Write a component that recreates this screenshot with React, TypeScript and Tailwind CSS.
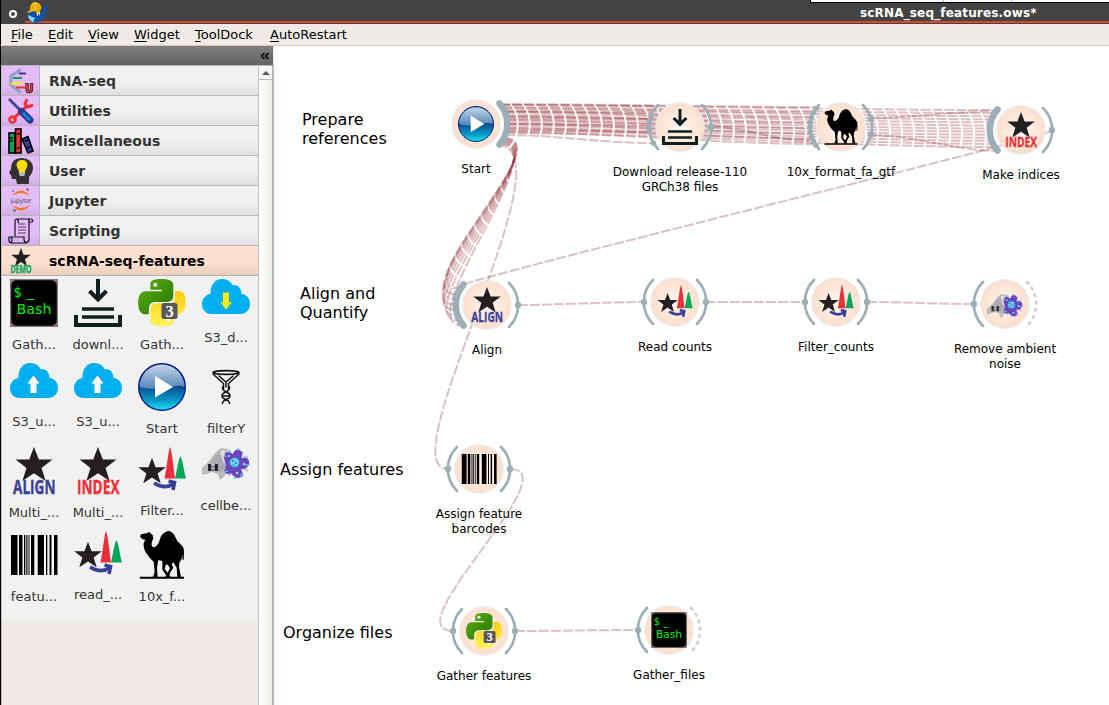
import React from "react";

const STAR = "0,-10 2.6,-3.1 10,-3.1 4.1,1.4 6.3,8.6 0,4.3 -6.3,8.6 -4.1,1.4 -10,-3.1 -2.6,-3.1";

type IconProps = { className?: string };

function Svg({ box = "0 0 48 48", className = "size-12", children }: { box?: string; className?: string; children: React.ReactNode }) {
  return (
    <svg viewBox={box} className={`block shrink-0 overflow-visible ${className}`}>
      {children}
    </svg>
  );
}

function BashIcon({ className }: IconProps) {
  return (
    <Svg className={className}>
      <rect width="48" height="48" fill="#86767a" />
      <rect x="1.5" y="1.5" width="45" height="45" rx="5" fill="#000" stroke="#222" />
      <g fill="#00f000" fontFamily="DejaVu Sans, sans-serif" fontSize="13.5">
        <text x="3.5" y="17.5">$</text>
        <text x="17" y="17.5">_</text>
        <text x="6.5" y="35" textLength="35" lengthAdjust="spacingAndGlyphs">Bash</text>
      </g>
    </Svg>
  );
}

function DownloadIcon({ className }: IconProps) {
  return (
    <Svg className={className}>
      <g fill="none" stroke="#111f1f" strokeWidth="4">
        <path d="M24 0V20M15.5 12L24 20.5L32.5 12" />
        <path d="M8 30H40M8 38H40" strokeWidth="3.4" />
        <path d="M2 36V46H46V36" />
      </g>
    </Svg>
  );
}

function PythonIcon({ className }: IconProps) {
  return (
    <Svg className={className}>
      <defs>
        <linearGradient id="pyGreen" x1="0" y1="0" x2="1" y2="1">
          <stop offset="0" stopColor="#5db512" />
          <stop offset="1" stopColor="#237000" />
        </linearGradient>
        <linearGradient id="pyGold" x1="0" y1="0" x2="0" y2="1">
          <stop offset="0" stopColor="#ffcb10" />
          <stop offset="1" stopColor="#fff35a" />
        </linearGradient>
      </defs>
      <g transform="translate(0.2 0) scale(1.97)">
        <path fill="url(#pyGreen)" d="M14.25.18l.9.2.73.26.59.3.45.32.34.34.25.34.16.33.1.3.04.26.02.2-.01.13V8.5l-.05.63-.13.55-.21.46-.26.38-.3.31-.33.25-.35.19-.35.14-.33.1-.3.07-.26.04-.21.02H8.77l-.69.05-.59.14-.5.22-.41.27-.33.32-.27.35-.2.36-.15.37-.1.35-.07.32-.04.27-.02.21v3.06H3.17l-.21-.03-.28-.07-.32-.12-.35-.18-.36-.26-.36-.36-.35-.46-.32-.59-.28-.73-.21-.88-.14-1.05-.05-1.23.06-1.22.16-1.04.24-.87.32-.71.36-.57.4-.44.42-.33.42-.24.4-.16.36-.1.32-.05.24-.01h.16l.06.01h8.16v-.83H6.18l-.01-2.75-.02-.37.05-.34.11-.31.17-.28.25-.26.31-.23.38-.2.44-.18.51-.15.58-.12.64-.1.71-.06.77-.04.84-.02 1.27.05z" />
        <circle cx="8.7" cy="2.9" r="1" fill="#fff" />
        <path fill="url(#pyGold)" d="M21.1 6.11l.28.06.32.12.35.18.36.27.36.35.35.47.32.59.28.73.21.88.14 1.04.05 1.23-.06 1.23-.16 1.04-.24.86-.32.71-.36.57-.4.45-.42.33-.42.24-.4.16-.36.09-.32.05-.24.02-.16-.01h-8.22v.82h5.84l.01 2.76.02.36-.05.34-.11.31-.17.29-.25.25-.31.24-.38.2-.44.17-.51.15-.58.13-.64.09-.71.07-.77.04-.84.01-1.27-.04-1.07-.14-.9-.2-.73-.25-.59-.3-.45-.33-.34-.34-.25-.34-.16-.33-.1-.3-.04-.25-.02-.2.01-.13v-5.34l.05-.64.13-.54.21-.46.26-.38.3-.32.33-.24.35-.2.35-.14.33-.1.3-.06.26-.04.21-.02.13-.01h5.84l.69-.05.59-.14.5-.21.41-.28.33-.32.27-.35.2-.36.15-.36.1-.35.07-.32.04-.28.02-.21V6.07h2.09l.14.01z" />
        <circle cx="15.2" cy="20.8" r="1" fill="#fffbe0" />
      </g>
      <rect x="23.5" y="24" width="16" height="16" rx="2.5" fill="#585858" />
      <text x="31.5" y="37.600" textAnchor="middle" fill="#fff" fontSize="16.5" fontWeight="700" fontFamily="Liberation Serif, serif">3</text>
    </Svg>
  );
}

function CloudIcon({ up }: { up?: boolean }) {
  return (
    <Svg box="0 0 48 35" className="h-[35px] w-12">
      <path fill="#00aff0" d="M9.500 35C3.500 35 0 30.500 0 25C0 19.500 4 15.500 8.500 15C8 6 13 0 20 0C26 0 29 3 31 6.500C36 5 39.500 10 39.500 15C45 15.500 48 20 48 25C48 30.500 44 35 38.500 35Z" />
      {up ? (
        <path fill="#fff" d="M23.500 12.500L29.500 20.500H26.500V30H20.500V20.500H17.500Z" />
      ) : (
        <path fill="#ffee10" d="M21 13.500H27V23H30L24 30.500L18.500 23H21Z" />
      )}
    </Svg>
  );
}

function StartIcon({ className }: IconProps) {
  return (
    <Svg className={className}>
      <defs>
        <linearGradient id="playBase" x1="0" y1="0" x2="0" y2="1">
          <stop offset="0" stopColor="#08407c" />
          <stop offset=".5" stopColor="#084d90" />
          <stop offset=".8" stopColor="#099cca" />
          <stop offset="1" stopColor="#25e1ee" />
        </linearGradient>
        <linearGradient id="playGloss" x1="0" y1="0" x2="0" y2="1">
          <stop offset="0" stopColor="#c3d8e9" />
          <stop offset="1" stopColor="#5484b6" />
        </linearGradient>
      </defs>
      <circle cx="24" cy="24" r="23.300" fill="url(#playBase)" stroke="#00118c" strokeWidth="1.300" />
      <path d="M1.500 24A22.500 22.500 0 0 1 46.500 24C35 19 28 30 1.500 24Z" fill="url(#playGloss)" />
      <path d="M17 13V34.500L35 24Z" fill="#fff" />
    </Svg>
  );
}

function FunnelIcon() {
  return (
    <Svg box="0 0 48 46" className="h-[46px] w-12">
      <g fill="none" stroke="#111" strokeWidth="1.700" strokeLinecap="round">
        <ellipse cx="24" cy="9.500" rx="13" ry="1.800" />
        <path d="M11 11L21.500 20.500V26M37 11L26.500 20.500V26M17 13L24 19L31 13M24 19V24" strokeWidth="1.500" />
        <path d="M20.500 24C20 30 28 28 28 33C28 37 20 36 20.500 40.500M27.500 24C28 30 20 28 20 33C20 37 28 36 27.500 40.500M21 33H27" strokeWidth="1.500" />
      </g>
    </Svg>
  );
}

function StarWord({ word, color, className }: { word: string; color: string; className?: string }) {
  return (
    <Svg className={className}>
      <polygon points={STAR} fill="#231f20" transform="translate(24 18.300) scale(1.840)" />
      <text
        x="3"
        y="47.200"
        fill={color}
        stroke={color}
        strokeWidth=".4"
        fontFamily="Open Sans, sans-serif"
        fontWeight="700"
        fontSize="19"
        textLength="42.500"
        lengthAdjust="spacingAndGlyphs"
      >
        {word}
      </text>
    </Svg>
  );
}

function AlignIcon({ className }: IconProps) {
  return <StarWord word="ALIGN" color="#3b3f98" className={className} />;
}

function IndexIcon({ className }: IconProps) {
  return <StarWord word="INDEX" color="#ef2f37" className={className} />;
}

function CountsIcon({ className = "h-[46px] w-12" }: IconProps) {
  return (
    <Svg box="0 0 48 46" className={className}>
      <polygon points={STAR} fill="#231f20" transform="translate(14 24.500) scale(1.380)" />
      <path d="M32 0C34 4 35.500 21 37 31.500H26.500C29 20 30 5 32 0Z" fill="#ef2f37" />
      <path d="M42.500 9C45 14 46 25 48 31.500H37C39 24 40 13 42.500 9Z" fill="#00a65a" />
      <path d="M16 36Q27 43 36 36.500M30.500 34L36.500 35.500L35 43" fill="none" stroke="#3b3f98" strokeWidth="3.600" />
    </Svg>
  );
}

const SPIKES = [0, 30, 60, 90, 120, 150, 180, 210, 240, 270, 300, 330];

function CellIcon({ className = "h-[41px] w-12" }: IconProps) {
  return (
    <Svg box="0 0 48 41" className={className}>
      <path d="M0 28L0 21L7 14L14 5L19 1L26 2L29 12L30 23L25 26L21 31L18 33L16 27L10 25L5 27Z" fill="#bdbdc0" />
      <path d="M9 14L18 4L20 14L24 20L19 26L8 22Z" fill="#acacb0" />
      <path d="M18 4L22 3L25 12L22 17Z" fill="#dedee0" />
      <path d="M6 17H9V24H6ZM13 17H16V24H13Z" fill="#29292d" />
      <path d="M9 18H13V24H9Z" fill="#77777b" />
      <path d="M9.500 18H12.500M9.500 21H12.500" stroke="#eee" />
      <g transform="translate(34 17)" stroke="#a39fe2" strokeWidth="1.400">
        {SPIKES.map((a) => (
          <path key={a} d="M10 0H14" transform={`rotate(${a})`} />
        ))}
      </g>
      <path d="M23 6Q27 4 31 7Q33 1 38 3Q42 6 39 11Q48 10 47 16Q46 23 39 22Q43 29 37 31Q32 31 29 26Q24 29 22 24Q24 21 24 17Q21 12 23 6Z" fill="#6945bd" />
      <g stroke="#65b7ea" strokeWidth="1.400">
        <path d="M27 3L29 6M36 1V4M44 9L41 11M47 18H43M41 30L38 27M33 32V29M22 25L26 24M22 8L25 10" />
      </g>
      <circle cx="32.500" cy="15.500" r="4.800" fill="#72d4ef" stroke="#2493c9" />
      <path d="M30 14H32M33 16H35M31 18H32" stroke="#206fbd" strokeWidth="1.500" />
      <circle cx="27" cy="9" r="1" fill="#a9e3ee" />
      <circle cx="42" cy="17" r="1.200" fill="#a9e3ee" />
      <circle cx="35" cy="26" r="1.200" fill="#a9e3ee" />
    </Svg>
  );
}

const BARS = [
  [1, 6.5], [9, 3.5], [14, 1.3], [16.3, 1.2], [18.5, 1], [21, 3.3], [27.7, 6.3], [36, 1.3], [39.5, 2], [44, 3.5],
];

function BarcodeIcon({ className }: IconProps) {
  return (
    <Svg className={className}>
      <rect x="1" y="4" width="47" height="40" fill="#fff" opacity=".5" />
      {BARS.map(([x, w]) => (
        <rect key={x} x={x} y="4" width={w} height="40" fill="#000" />
      ))}
    </Svg>
  );
}

function CamelIcon({ className }: IconProps) {
  return (
    <Svg box="0 0 144 144" className={className}>
      <path
        d="M6 17L9 10L18 8L28 6L34 2L37 7L44 12L46 22L42 32Q38 44 46 49Q55 48 62 36L68 18Q74 5 90 0Q102 0 110 14L118 30L130 42Q139 50 138 66L137 88L133 84L134 68L130 86L124 95L123 108L129 138H118L116 110L106 94L101 100L106 110L98 122L92 138H82L96 112L90 102L84 100L80 114L92 130L98 138H88L73 116V90L61 87L57 110L59 138H45L50 124L47 92L36 82L22 62Q14 44 18 34L22 26L14 25Z"
        fill="#000"
      />
      <path d="M6 140H138" stroke="#000" strokeWidth="6" />
    </Svg>
  );
}

function RnaIcon() {
  return (
    <Svg box="0 0 26 26" className="size-[26px]">
      <path d="M13 1.500L3 8V17L13 25" fill="none" stroke="#8fa2c8" strokeWidth="3.200" />
      <path d="M11 5.500H18" stroke="#3a389c" strokeWidth="2" />
      <path d="M5 10H14" stroke="#169a68" strokeWidth="2" />
      <path d="M3 15.500H14" stroke="#ffef00" strokeWidth="2" />
      <path d="M8 19.500H17" stroke="#e63238" strokeWidth="2" />
      <path d="M19 15V21Q19 23.500 21.300 23.500T23.500 21V15" fill="none" stroke="#4b2430" strokeWidth="3.400" />
      <path d="M19 16V21Q19 23.500 21.300 23.500T23.500 21V16" fill="none" stroke="#e04040" strokeWidth="1.500" />
    </Svg>
  );
}

function ToolsIcon() {
  return (
    <Svg box="0 0 26 26" className="size-[26px]">
      <path d="M5 21L20 7" stroke="#ef2f37" strokeWidth="3" />
      <circle cx="4.500" cy="21.500" r="3" fill="none" stroke="#ef2f37" strokeWidth="2.600" />
      <path d="M19 1L17 6L20 9L25 7" fill="none" stroke="#ef2f37" strokeWidth="3" />
      <path d="M1 1L12 12" stroke="#3b3f98" strokeWidth="2.600" />
      <path d="M13.500 13.500L22 22" stroke="#303894" strokeWidth="7" strokeLinecap="round" />
      <path d="M15 15L22 22" stroke="#0a8fd4" strokeWidth="2.500" />
    </Svg>
  );
}

function BooksIcon() {
  return (
    <Svg box="0 0 26 26" className="size-[26px]">
      <g stroke="#000" strokeWidth="1.600">
        <rect x="1" y="5" width="6" height="20" fill="#00a65a" />
        <rect x="7.500" y="1" width="5.500" height="24" fill="#ef2f37" />
        <path d="M14 11L20 8.500L25 23L20 25Z" fill="#3b3f98" />
      </g>
      <path d="M2 10H5M2 13H5M9 6H12M9 20H12M17 13L20 12M19 20L22 19" stroke="#000" strokeWidth="1.500" />
    </Svg>
  );
}

function UserIcon() {
  return (
    <Svg box="0 0 26 26" className="size-[26px]">
      <path d="M9 26L8 21H4L3 17L1 15L3 11Q3 0 14 0Q25 1 25 10Q25 15 21 19V26Z" fill="#333132" />
      <path d="M8.500 7Q9 2 14 2T19.500 7Q19 10 17 13V16H11V13Q9 10 8.500 7Z" fill="#ffdd05" />
      <path d="M11.500 14H16.500V18H11.500Z" fill="#aebdc2" />
    </Svg>
  );
}

function JupyterIcon() {
  return (
    <Svg box="0 0 26 26" className="size-[26px]">
      <path d="M4 8Q13-3 22 8Q13 2 4 8ZM4 17Q13 28 22 17Q13 23 4 17Z" fill="#f37726" />
      <text x="2.500" y="14.500" fontSize="6.500" textLength="21" fill="#4e4e4e" fontFamily="DejaVu Sans, sans-serif">jupyter</text>
      <g fill="#808285">
        <circle cx="5" cy="3" r="1" />
        <circle cx="19.500" cy="1.500" r="1.500" />
        <circle cx="6.500" cy="22.500" r="1.700" />
      </g>
    </Svg>
  );
}

function ScrollIcon() {
  return (
    <Svg box="0 0 26 26" className="size-[26px]">
      <path d="M7 18V4Q7 1 9 1H23Q26 2 24 4H21V22Q20 25 17 25H3Q0 24 1 19H16V22Q17 25 19 24M9 1Q11 2 10 5M21 4Q20 2 22 1M3 19Q5 22 3 25" fill="none" stroke="#151018" strokeWidth="1.200" />
      <path d="M10 6H17M10 9H18M10 12H18M10 15H18" stroke="#39333c" strokeWidth=".9" />
    </Svg>
  );
}

function DemoIcon() {
  return (
    <Svg box="0 0 26 26" className="size-[26px]">
      <polygon points={STAR} fill="#231f20" transform="translate(13 9.800) scale(.97)" />
      <text x="2.500" y="25.300" fontSize="10.500" fontWeight="700" textLength="21" lengthAdjust="spacingAndGlyphs" fill="#00a65a" stroke="#00a65a" strokeWidth=".3" fontFamily="Open Sans, sans-serif">DEMO</text>
    </Svg>
  );
}

function WhaleIcon() {
  return (
    <Svg box="0 0 22 22" className="h-[22px] w-[22px]">
      <path d="M2 11H17L17 9L14 6L18 7L20 4L22 5L21 9L19 13Q19 20 11 21.500H6Q1 18 2 11Z" fill="#0b54a5" />
      <path d="M2 14L9 17L7 21.500Q2 19 2 14Z" fill="#83cdf3" />
      <path d="M1 11L4 9Q3 3 8 1Q15 1 15.500 7L14 10V12H10L9 10L2 12Z" fill="#e5ac00" />
      <path d="M6 4L9 2L12 3M9 5V9" stroke="#ffd925" strokeWidth="1.300" fill="none" />
      <rect x="11" y="12" width="3" height="3" fill="#fff" />
      <rect x="12" y="13" width="1.500" height="2" fill="#072d58" />
    </Svg>
  );
}

const MENUS = [
  { name: "File", width: "w-[37px]" },
  { name: "Edit", width: "w-10" },
  { name: "View", width: "w-[46px]" },
  { name: "Widget", width: "w-[61px]" },
  { name: "ToolDock", width: "w-[75px]" },
  { name: "AutoRestart", width: "w-24" },
];

const CATEGORIES = [
  { name: "RNA-seq", icon: <RnaIcon /> },
  { name: "Utilities", icon: <ToolsIcon /> },
  { name: "Miscellaneous", icon: <BooksIcon /> },
  { name: "User", icon: <UserIcon /> },
  { name: "Jupyter", icon: <JupyterIcon /> },
  { name: "Scripting", icon: <ScrollIcon /> },
];

const TOOLS = [
  { name: "Gath...", icon: <BashIcon /> },
  { name: "downl...", icon: <DownloadIcon /> },
  { name: "Gath...", icon: <PythonIcon /> },
  { name: "S3_d...", icon: <CloudIcon />, slot: "h-[41px]" },
  { name: "S3_u...", icon: <CloudIcon up />, slot: "h-[41px]" },
  { name: "S3_u...", icon: <CloudIcon up />, slot: "h-[41px]" },
  { name: "Start", icon: <StartIcon /> },
  { name: "filterY", icon: <FunnelIcon />, slot: "h-12" },
  { name: "Multi_...", icon: <AlignIcon /> },
  { name: "Multi_...", icon: <IndexIcon /> },
  { name: "Filter...", icon: <CountsIcon />, slot: "h-[46px]" },
  { name: "cellbe...", icon: <CellIcon />, slot: "h-[41px]" },
  { name: "featu...", icon: <BarcodeIcon /> },
  { name: "read_...", icon: <CountsIcon />, slot: "h-[46px]" },
  { name: "10x_f...", icon: <CamelIcon /> },
];

type Side = "none" | "line" | "thick" | "dashed";
type FlowNode = {
  x: number;
  y: number;
  label: string[];
  icon: React.ReactNode;
  left: Side;
  right: Side;
  leftDots?: number[];
  rightDots?: number[];
};

const S = "size-9";

// Node centres, in canvas coordinates.
const NODES: FlowNode[] = [
  { x: 202, y: 78, label: ["Start"], icon: <StartIcon className={S} />, left: "none", right: "thick" },
  { x: 406, y: 81, label: ["Download release-110", "GRCh38 files"], icon: <DownloadIcon className={S} />, left: "line", right: "line", leftDots: [-20, -10, 0, 7, 31], rightDots: [0] },
  { x: 567, y: 81, label: ["10x_format_fa_gtf"], icon: <CamelIcon className={S} />, left: "line", right: "line", leftDots: [-37, -28, -18, -9, 0, 9, 18, 28, 36], rightDots: [-16, 14] },
  { x: 747, y: 84, label: ["Make indices"], icon: <IndexIcon className={S} />, left: "thick", right: "line", rightDots: [0] },
  { x: 213, y: 259, label: ["Align"], icon: <AlignIcon className={S} />, left: "thick", right: "line", rightDots: [0] },
  { x: 401, y: 256, label: ["Read counts"], icon: <CountsIcon className="h-[34px] w-9" />, left: "line", right: "line", leftDots: [0], rightDots: [0] },
  { x: 562, y: 256, label: ["Filter_counts"], icon: <CountsIcon className="h-[34px] w-9" />, left: "line", right: "line", leftDots: [0], rightDots: [0] },
  { x: 731, y: 258, label: ["Remove ambient", "noise"], icon: <CellIcon className="mt-2 h-[31px] w-9" />, left: "line", right: "dashed", leftDots: [0] },
  { x: 205, y: 423, label: ["Assign feature", "barcodes"], icon: <BarcodeIcon className={S} />, left: "line", right: "line", leftDots: [0], rightDots: [0] },
  { x: 210, y: 585, label: ["Gather features"], icon: <PythonIcon className={S} />, left: "line", right: "line", leftDots: [0], rightDots: [0] },
  { x: 395, y: 584, label: ["Gather_files"], icon: <BashIcon className={S} />, left: "line", right: "dashed", leftDots: [0] },
];

const ANNOTATIONS = [
  { lines: ["Prepare", "references"], place: "left-[28px] top-[64px]" },
  { lines: ["Align and", "Quantify"], place: "left-[26px] top-[238px]" },
  { lines: ["Assign features"], place: "left-[6px] top-[414px]" },
  { lines: ["Organize files"], place: "left-[9px] top-[577px]" },
];

function curve(x1: number, y1: number, x2: number, y2: number, d: number, e = d) {
  return `M${x1} ${y1}C${x1 + d} ${y1} ${x2 - e} ${y2} ${x2} ${y2}`;
}

// A point on the connector arc of a node, at the given vertical offset.
function arcX(cx: number, dy: number, side: 1 | -1) {
  return cx + side * Math.sqrt(31 * 31 - dy * dy);
}

function buildEdges() {
  const edges: string[] = [];
  const fan = (n: number, from: [number, number], target: [number, number], to: [number, number], d: number) => {
    for (let i = 0; i < n; i++) {
      const t = i / (n - 1);
      const a = from[0] + (from[1] - from[0]) * t;
      const b = to[0] + (to[1] - to[0]) * t;
      edges.push(curve(arcX(202, a, 1), 78 + a, arcX(target[0], b, -1), target[1] + b, d));
    }
  };
  fan(5, [-19, 6], [406, 81], [-21, 5], 45);
  edges.push(curve(231, 89, 379, 97, 55));
  fan(8, [-20, 8], [567, 81], [-20, 17], 90);
  fan(13, [-19, 9], [747, 84], [-20, 17], 150);
  fan(8, [14, 20], [213, 259], [-16, 21], 60);
  edges.push(curve(223, 99, 174, 423, 78, 62));
  edges.push(curve(437, 81, 536, 95, 35));
  edges.push(curve(597, 72, 724, 65, 40));
  edges.push(curve(598, 89, 724, 105, 40));
  edges.push(curve(778, 84, 188, 240, 28));
  edges.push(curve(244, 259, 370, 256, 35));
  edges.push(curve(432, 256, 531, 256, 30));
  edges.push(curve(593, 256, 700, 258, 35));
  edges.push(curve(236, 423, 179, 585, 61));
  edges.push(curve(241, 585, 364, 584, 40));
  return edges;
}

const EDGES = buildEdges();

function SideArc({ kind, flip }: { kind: Side; flip: boolean }) {
  if (kind === "none") return null;
  return (
    <path
      d={kind === "thick" ? "M23.500-20.500A31 31 0 0 1 23.500 20.500" : "M22-22A31 31 0 0 1 22 22"}
      transform={flip ? "scale(-1 1)" : undefined}
      fill="none"
      stroke={kind === "dashed" ? "#c8d2d7" : "#9caeb6"}
      strokeWidth={kind === "thick" ? 6.5 : 2.7}
      strokeLinecap="round"
      strokeDasharray={kind === "dashed" ? "2 5.300" : undefined}
    />
  );
}

function Dots({ angles, side }: { angles: number[]; side: 1 | -1 }) {
  return (
    <>
      {angles.map((a) => {
        const r = (a * Math.PI) / 180;
        return <circle key={a} cx={side * 31 * Math.cos(r)} cy={31 * Math.sin(r)} r={angles.length > 3 ? 2.7 : 3.2} fill="#9caeb6" />;
      })}
    </>
  );
}

function FlowCanvas() {
  return (
    <main className="relative flex-1 overflow-hidden bg-white">
      <svg className="absolute inset-0 h-full w-full">
        <defs>
          <radialGradient id="nodeFill">
            <stop offset="0" stopColor="#fff7f2" />
            <stop offset="1" stopColor="#ffdecb" />
          </radialGradient>
        </defs>
        <g fill="none" stroke="#922f38" strokeOpacity=".3" strokeWidth="2" strokeDasharray="10 2">
          {EDGES.map((d, i) => (
            <path key={i} d={d} />
          ))}
        </g>
        {NODES.map((n) => (
          <g key={n.label[0]} transform={`translate(${n.x} ${n.y})`}>
            <SideArc kind={n.left} flip />
            <SideArc kind={n.right} flip={false} />
            <Dots angles={n.leftDots ?? []} side={-1} />
            <Dots angles={n.rightDots ?? []} side={1} />
            <circle r="24.200" fill="url(#nodeFill)" stroke="#e5ebef" strokeWidth="1.200" />
          </g>
        ))}
      </svg>
      {NODES.map((n) => (
        <div key={n.label[0]} className="absolute flex w-0 justify-center" style={{ left: n.x, top: n.y }}>
          <div className="absolute flex h-9 w-9 -translate-y-[18px] items-center justify-center">{n.icon}</div>
          <div className="absolute top-[38px] whitespace-nowrap text-center text-[12px] leading-[15px] text-black">
            {n.label.map((line) => (
              <div key={line}>{line}</div>
            ))}
          </div>
        </div>
      ))}
      {ANNOTATIONS.map((a) => (
        <div key={a.lines[0]} className={`absolute whitespace-nowrap text-[16px] leading-[19px] text-black ${a.place}`}>
          {a.lines.map((line) => (
            <div key={line}>{line}</div>
          ))}
        </div>
      ))}
    </main>
  );
}

function Sidebar() {
  return (
    <aside className="flex w-[274px] shrink-0 flex-col border-l border-black bg-[#efebe7]">
      <div className="flex h-[19px] w-[272px] items-center justify-end bg-linear-to-b from-[#7e7e7e] to-[#636363] pr-1">
        <svg viewBox="0 0 9 8" className="h-2 w-[9px]">
          <path d="M4.500 1L1.500 4L4.500 7M8.500 1L5.500 4L8.500 7" fill="none" stroke="#000" strokeWidth="1.600" />
        </svg>
      </div>
      <div className="flex min-h-0 flex-1 border-r-2 border-[#aeb8ba]">
        <div className="w-[258px] shrink-0 border-x border-[#c2c2c2]">
          <div className="border-t border-[#b4b4b4]">
            {CATEGORIES.map((c) => (
              <div key={c.name} className="flex h-[30px] border-b border-[#b4b4b4]">
                <div className="flex w-[38px] items-center justify-center border-r border-[#b4b4b4] bg-linear-to-b from-[#e5bcfb] from-60% to-[#d3ace7]">{c.icon}</div>
                <div className="flex flex-1 items-center bg-linear-to-b from-[#f1f1f1] from-50% to-[#e0e0e0] pl-[9px] pt-px text-[14px] font-bold text-[#333]">{c.name}</div>
              </div>
            ))}
            <div className="flex h-[30px] border-b border-[#b4b4b4] bg-linear-to-b from-[#ffdfcd] from-60% to-[#ebcebd]">
              <div className="flex w-[38px] items-center justify-center"><DemoIcon /></div>
              <div className="flex items-center pl-[9px] pt-px text-[14px] font-bold text-black">scRNA-seq-features</div>
            </div>
          </div>
          <div className="grid h-[344px] auto-rows-[84px] grid-cols-4 bg-[#f1f1f1] pt-[3px]">
            {TOOLS.map((t, i) => (
              <div key={i} className="flex flex-col items-center">
                <div className={t.slot ?? "h-12"}>{t.icon}</div>
                <div className="mt-[10px] whitespace-nowrap text-[13px] leading-4 text-[#333]">{t.name}</div>
              </div>
            ))}
          </div>
        </div>
        <div className="flex flex-1 flex-col bg-linear-to-r from-white to-[#eeece8]">
          <div className="flex h-[15px] items-center justify-center border-y border-[#b8b8b5] bg-[#f8f8f7]">
            <svg viewBox="0 0 8 4" className="h-1 w-2">
              <path d="M0 4L4 0L8 4Z" fill="#555" />
            </svg>
          </div>
        </div>
      </div>
    </aside>
  );
}

export default function App() {
  return (
    <div className="flex h-[705px] w-[1109px] flex-col overflow-hidden bg-[#efebe7] font-['DejaVu_Sans',sans-serif]">
      <header className="relative flex h-6 shrink-0 border-l border-black bg-[#444]">
        <div className="flex w-6 items-center justify-center">
          <div className="mt-[3px] size-2 rounded-full border-2 border-white" />
        </div>
        <div className="mb-px flex flex-1 border-b-2 border-[#d94831]">
          <div className="flex-1" />
          <div className="w-[249px] pt-[5px] text-[12px] font-bold leading-4 tracking-[0.16px] text-white">scRNA_seq_features.ows*</div>
        </div>
        <div className="absolute left-[25px] top-px">
          <WhaleIcon />
        </div>
        <div className="absolute right-0 top-0 flex h-[3px] w-[299px] border-b border-l border-black bg-white">
          <div className="w-[133px] border-r border-[#bbb]" />
          <div className="w-[68px] border-r border-[#bbb]" />
        </div>
      </header>
      <nav className="flex h-[22px] shrink-0 items-center border-b border-l border-b-[#cfccc8] border-l-black bg-[#efebe7] pl-2.5 text-[13px] text-black">
        {MENUS.map((m) => (
          <div key={m.name} className={`${m.width} whitespace-nowrap`}>
            <span className="underline underline-offset-2">{m.name[0]}</span>
            {m.name.slice(1)}
          </div>
        ))}
      </nav>
      <div className="flex min-h-0 flex-1">
        <Sidebar />
        <FlowCanvas />
      </div>
    </div>
  );
}
